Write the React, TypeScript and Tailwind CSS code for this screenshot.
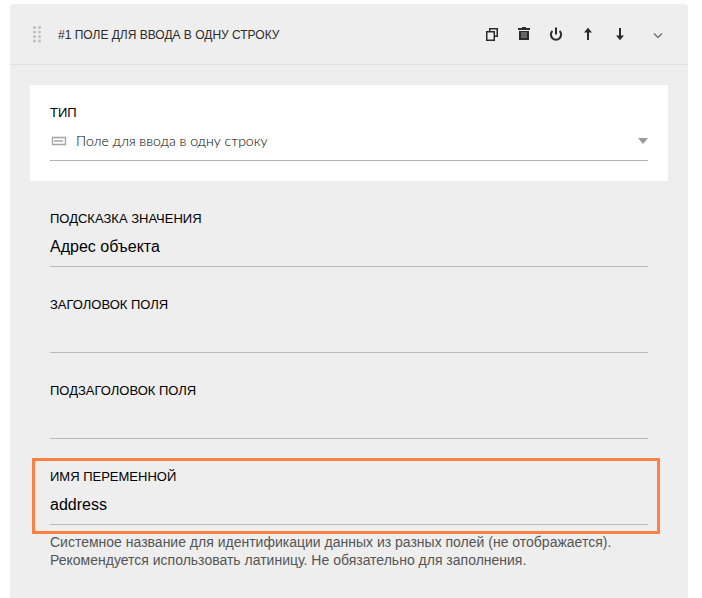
import { useState } from 'react'
import type { ReactNode } from 'react'

interface FieldProps {
  id: string
  label: string
  value: string
  onChange: (value: string) => void
}

interface ActionProps {
  title: string
  children: ReactNode
}

function Action({ title, children }: ActionProps) {
  return (
    <button type="button" title={title} aria-label={title} className="flex size-4 items-center justify-center">
      {children}
    </button>
  )
}

function Field({ id, label, value, onChange }: FieldProps) {
  return (
    <div>
      <label htmlFor={id} className="block text-[13px] leading-4 uppercase">
        {label}
      </label>
      <input
        id={id}
        type="text"
        value={value}
        onChange={(e) => onChange(e.target.value)}
        className="block h-10 w-full border-b border-[#b9b9b9] bg-transparent text-base outline-none"
      />
    </div>
  )
}

function DragHandle() {
  return (
    <svg width="10" height="18" viewBox="0 0 10 18" fill="#c2c2c2" aria-hidden="true">
      {[2.5, 7.5].map((x) =>
        [1.5, 6, 10.5, 15].map((y) => <circle key={`${x}-${y}`} cx={x} cy={y} r="1.6" />)
      )}
    </svg>
  )
}

function Header() {
  return (
    <header className="flex h-[61px] items-center border-b border-[#e0e0e0] px-[22px] pt-0.5 text-[#2b2b2b]">
      <DragHandle />
      <h2 className="ml-4 flex-1 text-xs uppercase">#1 Поле для ввода в одну строку</h2>
      <div className="flex items-center gap-4">
        <Action title="Дублировать">
          <svg width="16" height="16" viewBox="0 0 16 16" fill="none" stroke="currentColor" strokeWidth="1.5">
            <path d="M5.75 4.5V1.75h7.5v7.5H11" />
            <path d="M2.75 4.75h7.5v8.5h-7.5z" />
          </svg>
        </Action>
        <Action title="Удалить">
          <svg width="16" height="16" viewBox="0 0 16 16" fill="currentColor">
            <path d="M6 0h4v1h4v2H2V1h4z" />
            <path d="M3 4h10v9H3z" />
            <path d="M5 5h6v6H5z" fill="#666666" />
          </svg>
        </Action>
        <Action title="Отключить">
          <svg width="16" height="16" viewBox="0 0 16 16" fill="none" stroke="currentColor" strokeWidth="2">
            <path d="M4.4 4a5.1 5.1 0 1 0 7.2 0" />
            <path d="M8 .5v7" />
          </svg>
        </Action>
        <Action title="Выше">
          <svg width="16" height="16" viewBox="0 0 16 16" fill="currentColor">
            <path d="M8 .8 12 5.5H9V13H7V5.5H4z" />
          </svg>
        </Action>
        <Action title="Ниже">
          <svg width="16" height="16" viewBox="0 0 16 16" fill="currentColor">
            <path d="M8 13.2 4 8.5h3V1h2v7.5h3z" />
          </svg>
        </Action>
      </div>
      <div className="ml-[22px] flex">
        <Action title="Свернуть">
          <svg width="16" height="16" viewBox="0 0 16 16" fill="none" stroke="#666666" strokeWidth="1.2">
            <path d="m4 6.5 4 4 4-4" />
          </svg>
        </Action>
      </div>
    </header>
  )
}

function TypeSelect() {
  const [type, setType] = useState('line')

  return (
    <div className="bg-white p-5">
      <label htmlFor="type" className="block text-[13px] leading-4">
        ТИП
      </label>
      <div className="flex h-10 items-center border-b border-[#b3b3b3]">
        <svg width="18" height="10" viewBox="0 0 18 10" fill="none" aria-hidden="true">
          <path d="M2.5 1.5h13v7h-13z" stroke="#a3a3a3" strokeWidth="1.3" />
          <path d="M4 5h9" stroke="#bbbbbb" strokeWidth="2" />
        </svg>
        <select
          id="type"
          value={type}
          onChange={(e) => setType(e.target.value)}
          className="ml-2 min-w-0 flex-1 appearance-none bg-transparent font-['Lato','Noto_Sans',sans-serif] text-sm font-light outline-none"
        >
          <option value="line">Поле для ввода в одну строку</option>
          <option value="text">Поле для ввода в несколько строк</option>
        </select>
        <svg width="10" height="6" viewBox="0 0 10 6" fill="#999999" aria-hidden="true">
          <path d="M0 0h10L5 6z" />
        </svg>
      </div>
    </div>
  )
}

export default function App() {
  const [placeholder, setPlaceholder] = useState('Адрес объекта')
  const [title, setTitle] = useState('')
  const [subtitle, setSubtitle] = useState('')
  const [name, setName] = useState('address')

  return (
    <div className="bg-white pt-1 pr-3.5 pl-2.5 font-['Liberation_Sans',Arial,sans-serif] text-black">
      <section className="rounded-t bg-[#eeeeee] pb-[29px]">
        <Header />
        <div className="px-5 pt-5">
          <TypeSelect />
          <div className="flex flex-col gap-[30px] px-5 pt-[30px]">
            <Field id="placeholder" label="Подсказка значения" value={placeholder} onChange={setPlaceholder} />
            <Field id="title" label="Заголовок поля" value={title} onChange={setTitle} />
            <Field id="subtitle" label="Подзаголовок поля" value={subtitle} onChange={setSubtitle} />
            <div>
              <div className="relative">
                <Field id="name" label="Имя переменной" value={name} onChange={setName} />
                <div className="pointer-events-none absolute -top-[11px] -right-3 -bottom-[9px] -left-[18px] border-3 border-[#ff8040]" />
              </div>
              <p className="mt-2 text-sm leading-[18px] text-[#555555]">
                Системное название для идентификации данных из разных полей (не отображается).
                <br />
                Рекомендуется использовать латиницу. Не обязательно для заполнения.
              </p>
            </div>
          </div>
        </div>
      </section>
    </div>
  )
}
